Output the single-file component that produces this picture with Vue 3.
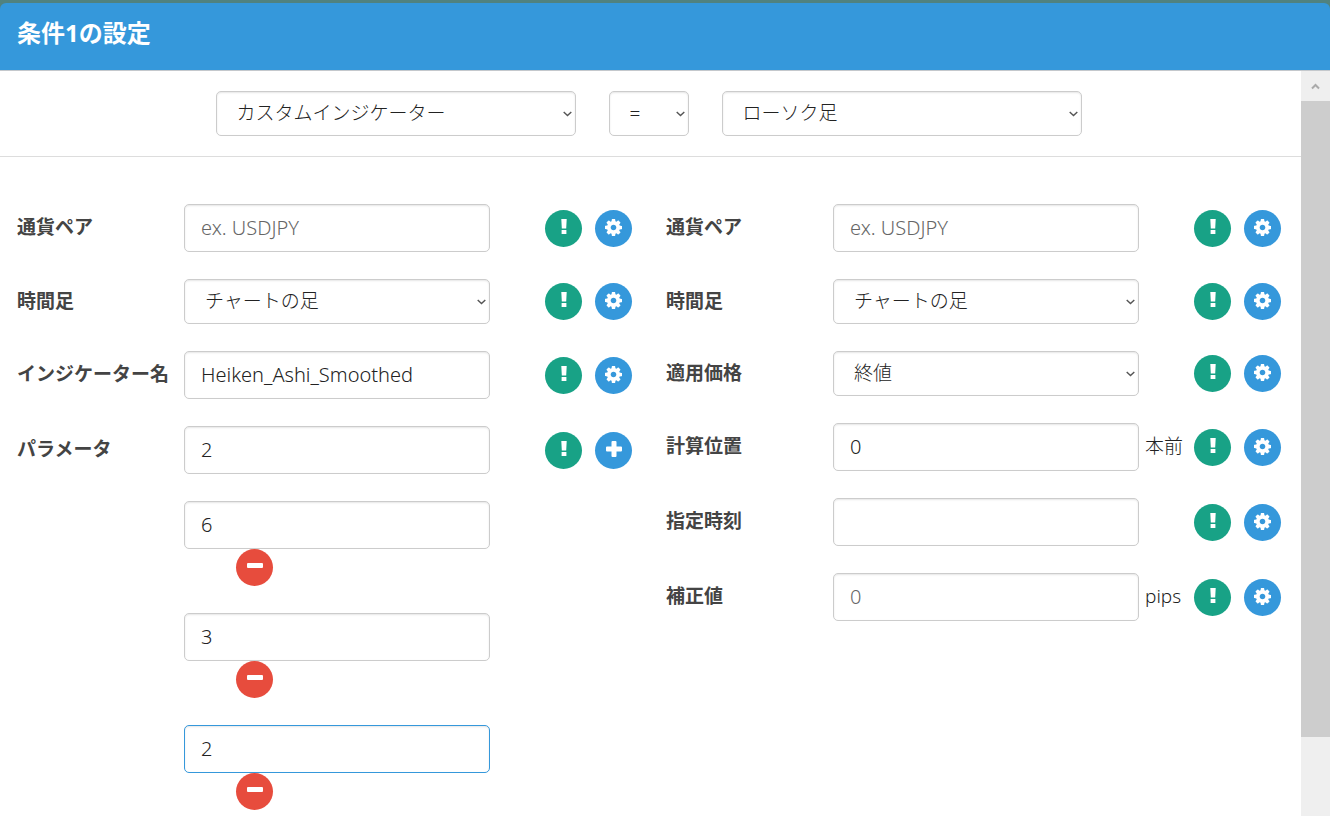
<script setup>
import { h, reactive } from 'vue'

const condition = reactive({ left: 'カスタムインジケーター', op: '=', right: 'ローソク足' })

const leftFields = reactive([
  { id: 'l-pair', label: '通貨ペア', type: 'text', value: '', placeholder: 'ex. USDJPY', action: 'gear' },
  { id: 'l-frame', label: '時間足', type: 'select', value: 'チャートの足', action: 'gear' },
  { id: 'l-name', label: 'インジケーター名', type: 'text', value: 'Heiken_Ashi_Smoothed', action: 'gear' },
  { id: 'l-param', label: 'パラメータ', type: 'text', value: '2', action: 'plus' },
])

const extraParams = reactive([
  { value: '6', active: false },
  { value: '3', active: false },
  { value: '2', active: true },
])

const rightFields = reactive([
  { id: 'r-pair', label: '通貨ペア', type: 'text', value: '', placeholder: 'ex. USDJPY', action: 'gear' },
  { id: 'r-frame', label: '時間足', type: 'select', value: 'チャートの足', action: 'gear' },
  { id: 'r-price', label: '適用価格', type: 'select', value: '終値', action: 'gear' },
  { id: 'r-shift', label: '計算位置', type: 'text', value: '0', unit: '本前', action: 'gear' },
  { id: 'r-time', label: '指定時刻', type: 'text', value: '', action: 'gear' },
  { id: 'r-adjust', label: '補正値', type: 'text', value: '', placeholder: '0', unit: 'pips', action: 'gear' },
])

const columns = [
  { key: 'left', fields: leftFields, extras: extraParams },
  { key: 'right', fields: rightFields, extras: [] },
]

const shapes = {
  bang: { box: '0 0 6 15', w: 6, h: 15, d: 'M.3 0h5.4l-.5 9.6H.8zM.6 11h4.8v4H.6z' },
  plus: { box: '0 0 16 16', w: 16, h: 16, d: 'M6.5 0h3a1 1 0 0 1 1 1v4.5H15a1 1 0 0 1 1 1v3a1 1 0 0 1-1 1h-4.500V15a1 1 0 0 1-1 1h-3a1 1 0 0 1-1-1v-4.500H1a1 1 0 0 1-1-1v-3a1 1 0 0 1 1-1h4.500V1a1 1 0 0 1 1-1z' },
  minus: { box: '0 0 16 5', w: 16, h: 5, d: 'M1 0h14a1 1 0 0 1 1 1v3a1 1 0 0 1-1 1H1a1 1 0 0 1-1-1V1a1 1 0 0 1 1-1z' },
  gear: { box: '0 128 1536 1536', w: 17, h: 17, d: 'M1024 896q0-106-75-181t-181-75-181 75-75 181 75 181 181 75 181-75 75-181zm512-109v222q0 12-8 23t-20 13l-185 28q-19 54-39 91 35 50 107 138 10 12 10 25t-9 23q-27 37-99 108t-94 71q-12 0-26-9l-138-108q-44 23-91 38-16 136-29 186-7 28-36 28h-222q-14 0-24.5-8.5t-11.5-21.5l-28-184q-49-16-90-37l-141 107q-10 9-25 9-14 0-25-11-126-114-165-168-7-10-7-23 0-12 8-23 15-21 51-66.5t54-70.5q-27-50-41-99l-183-27q-13-2-21-12.500t-8-23.500v-222q0-12 8-23t19-13l186-28q14-46 39-92-40-57-107-138-10-12-10-24 0-10 9-23 26-36 98.500-107.500t94.500-71.500q13 0 26 10l138 107q44-23 91-38 16-136 29-186 7-28 36-28h222q14 0 24.500 8.500t11.500 21.500l28 184q49 16 90 37l142-107q9-9 24-9 13 0 25 10 129 119 165 170 7 8 7 22 0 12-8 23-15 21-51 66.500t-54 70.500q26 50 41 98l183 28q13 2 21 12.500t8 23.500z' },
}

const Icon = (props) => {
  const s = shapes[props.name]
  return h('svg', { viewBox: s.box, width: s.w, height: s.h, 'aria-hidden': 'true' }, [
    h('path', { d: s.d, fill: 'currentColor' }),
  ])
}
Icon.props = ['name']
</script>

<template>
  <div class="dialog" role="dialog" aria-labelledby="dialog-title">
    <header class="header">
      <h1 id="dialog-title">条件1の設定</h1>
    </header>
    <div class="body">
      <main class="content">
        <div class="condition">
          <div class="select wide">
            <select v-model="condition.left" aria-label="左辺">
              <option>カスタムインジケーター</option>
            </select>
            <svg class="chevron" viewBox="0 0 9 6" aria-hidden="true"><path d="M.7.9 4.500 4.500 8.300.9" /></svg>
          </div>
          <div class="select narrow">
            <select v-model="condition.op" aria-label="比較">
              <option>=</option>
            </select>
            <svg class="chevron" viewBox="0 0 9 6" aria-hidden="true"><path d="M.7.9 4.500 4.500 8.300.9" /></svg>
          </div>
          <div class="select wide">
            <select v-model="condition.right" aria-label="右辺">
              <option>ローソク足</option>
            </select>
            <svg class="chevron" viewBox="0 0 9 6" aria-hidden="true"><path d="M.7.9 4.500 4.500 8.300.9" /></svg>
          </div>
        </div>

        <div class="columns">
          <section v-for="col in columns" :key="col.key" class="column">
            <div v-for="f in col.fields" :key="f.id" class="row">
              <label :for="f.id">{{ f.label }}</label>
              <div v-if="f.type === 'select'" class="select">
                <select :id="f.id" v-model="f.value">
                  <option>{{ f.value }}</option>
                </select>
                <svg class="chevron" viewBox="0 0 9 6" aria-hidden="true"><path d="M.7.9 4.500 4.500 8.300.9" /></svg>
              </div>
              <input v-else :id="f.id" v-model="f.value" type="text" :placeholder="f.placeholder" />
              <div class="aux">
                <span class="unit">{{ f.unit }}</span>
                <button type="button" class="round green" aria-label="説明"><Icon name="bang" /></button>
                <button type="button" class="round blue" :aria-label="f.action === 'plus' ? '追加' : '設定'">
                  <Icon :name="f.action" />
                </button>
              </div>
            </div>
            <div v-for="(p, i) in col.extras" :key="i" class="row extra">
              <div class="extra-cell">
                <input v-model="p.value" type="text" :class="{ active: p.active }" aria-label="パラメータ" />
                <button type="button" class="round red" aria-label="削除"><Icon name="minus" /></button>
              </div>
            </div>
          </section>
        </div>
      </main>
      <div class="scrollbar" aria-hidden="true">
        <div class="scroll-up">
          <svg viewBox="0 0 9 7" width="9" height="7"><path d="M1 5.500 4.500 2 8 5.500" /></svg>
        </div>
        <div class="track"><div class="thumb"></div></div>
      </div>
    </div>
  </div>
</template>

<style>
body {
  background: #50827f;
  overflow: hidden;
}
</style>

<style scoped>
.dialog {
  box-sizing: border-box;
  height: 100vh;
  padding-top: 3px;
  display: flex;
  flex-direction: column;
  font-family: "Noto Sans", "Noto Sans CJK JP", sans-serif;
  font-size: 19px;
  color: #333;
}
.header {
  flex: none;
  padding: 13px 17px 20px;
  background: #3598db;
  border-bottom: 1px solid #c4c8cc;
  border-radius: 6px 6px 0 0;
}
h1 {
  margin: 0;
  font-size: 24px;
  line-height: 34px;
  font-weight: 700;
  color: #fff;
}
.body {
  flex: 1;
  min-height: 0;
  display: flex;
  background: #fff;
}
.content {
  flex: 1;
  min-width: 0;
  overflow: hidden;
}
.condition {
  display: flex;
  justify-content: center;
  gap: 33px;
  padding: 20px 20px 20px 16px;
  border-bottom: 1px solid #ddd;
}
.wide {
  width: 360px;
}
.narrow {
  width: 80px;
}
.columns {
  display: grid;
  grid-template-columns: minmax(0, 1fr) minmax(0, 1fr);
  gap: 34px;
  padding: 47px 20px 27px 17px;
}
.column {
  display: flex;
  flex-direction: column;
  gap: 27px;
}
.row {
  display: grid;
  grid-template-columns: 167px minmax(0, 1fr) 142px;
  align-items: center;
}
label {
  font-weight: 700;
  line-height: 28px;
  padding-bottom: 2px;
  color: #444;
  white-space: nowrap;
}
input,
select {
  box-sizing: border-box;
  display: block;
  width: 100%;
  margin: 0;
  font-family: inherit;
  font-size: 19px;
  font-weight: 300;
  color: #222;
  background: #fff;
  border: 1px solid #ccc;
  border-radius: 5px;
  box-shadow: inset 0 1px 2px rgba(0, 0, 0, 0.1);
  outline: none;
}
input {
  height: 48px;
  padding: 0 16px 2px;
  font-size: 20px;
}
input::placeholder {
  color: #666;
  opacity: 1;
}
input.active {
  border-color: #3598db;
}
select {
  appearance: none;
  height: 45px;
  padding: 0 20px 2px;
}
.select {
  position: relative;
}
.chevron {
  position: absolute;
  right: 4px;
  top: 20px;
  width: 9px;
  height: 6px;
  fill: none;
  stroke: #555;
  stroke-width: 1.4;
  pointer-events: none;
}
.aux {
  display: flex;
  align-items: center;
  gap: 13px;
  padding-left: 6px;
}
.unit {
  flex: 1;
  margin-right: -13px;
  padding-bottom: 3px;
  font-weight: 300;
  line-height: 28px;
  color: #222;
  white-space: nowrap;
}
.round {
  flex: none;
  display: flex;
  align-items: center;
  justify-content: center;
  width: 37px;
  height: 37px;
  padding: 0 0 4px;
  border: 0;
  border-radius: 50%;
  color: #fff;
}
.green {
  background: #18a286;
}
.blue {
  padding-bottom: 2px;
  background: #3598db;
}
.red {
  background: #e74c3d;
}
.extra-cell {
  grid-column: 2;
}
.extra-cell .round {
  margin-left: 52px;
}
.scrollbar {
  flex: none;
  width: 29px;
  display: flex;
  flex-direction: column;
  background: #efefef;
}
.scroll-up {
  flex: none;
  height: 30px;
  display: flex;
  align-items: center;
  justify-content: center;
}
.scroll-up svg {
  fill: none;
  stroke: #aaa;
  stroke-width: 2;
}
.track {
  flex: 1;
}
.thumb {
  height: 89%;
  background: #cdcdcd;
}
</style>
